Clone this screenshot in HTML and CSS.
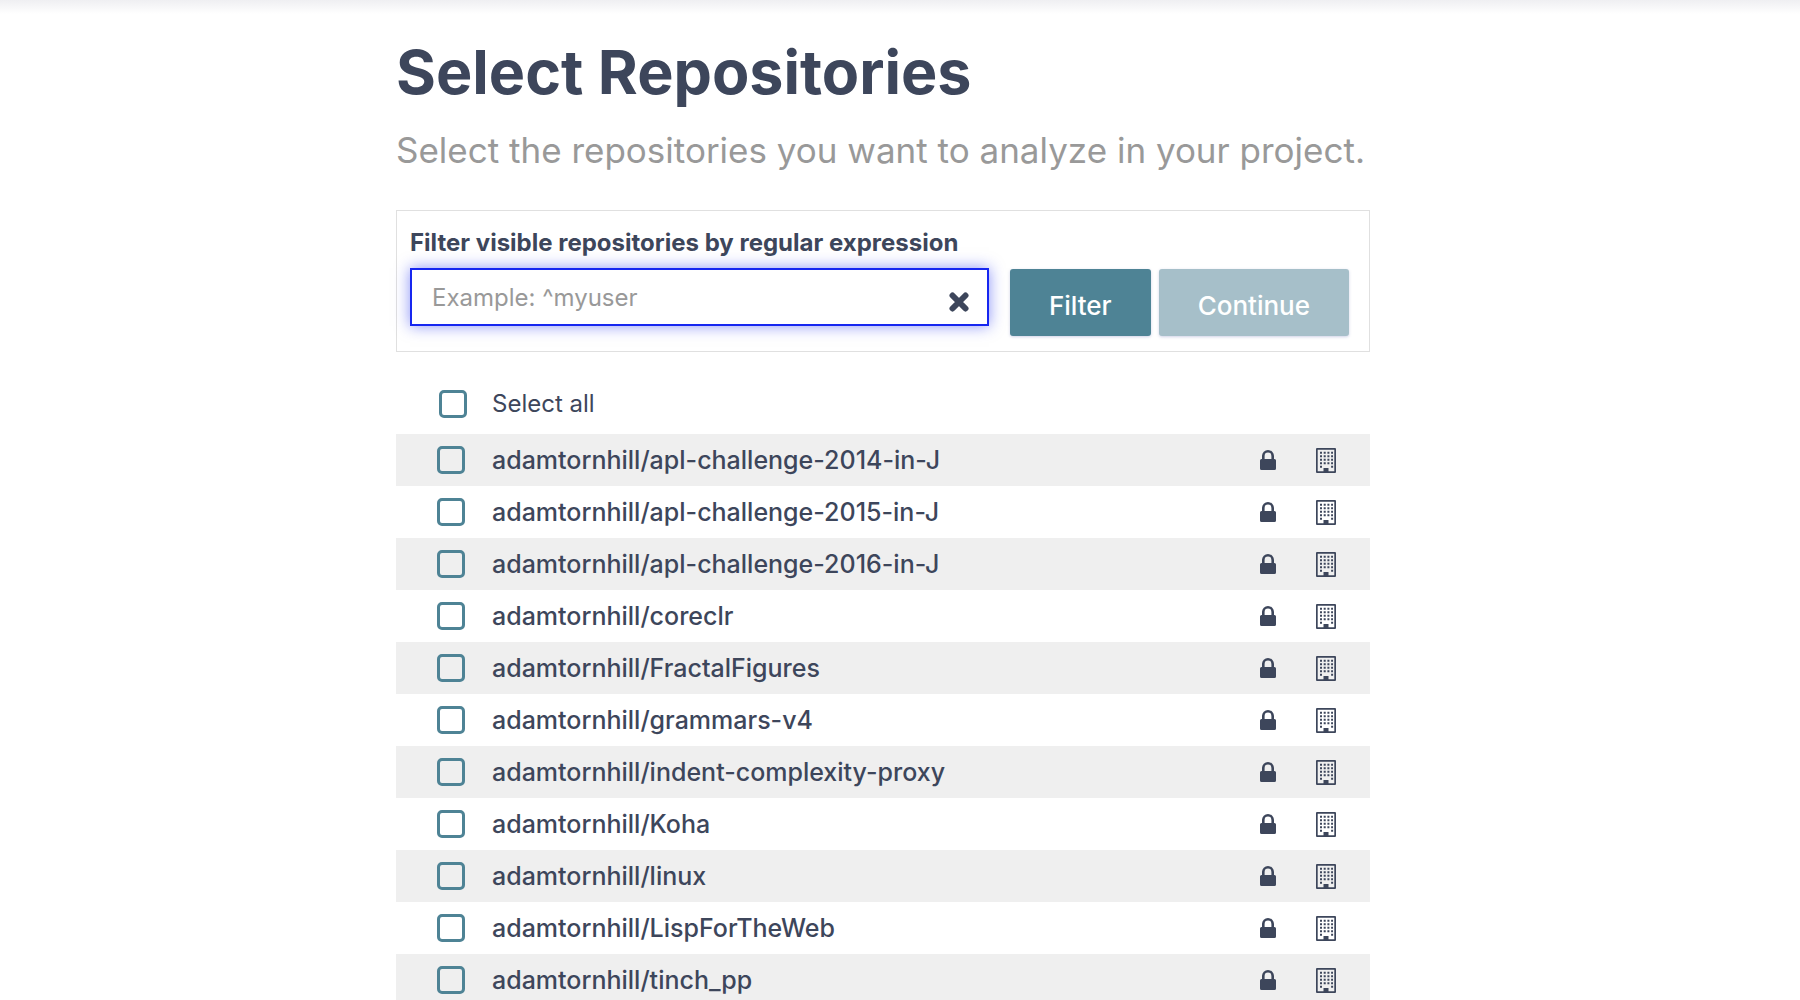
FILE: index.html
```html
<!DOCTYPE html>
<html lang="en">
<head>
<meta charset="utf-8">
<title>Select Repositories</title>
<link rel="stylesheet" href="styles.css">
</head>
<body>
<svg class="sprite" aria-hidden="true">
  <symbol id="lock" viewBox="0 0 16 20">
    <path fill-rule="evenodd" d="M1.500 9H2V6a6 6 0 0 1 12 0v3h.5A1.500 1.500 0 0 1 16 10.500v8a1.500 1.500 0 0 1-1.500 1.500h-13A1.500 1.500 0 0 1 0 18.500v-8A1.500 1.500 0 0 1 1.500 9zM4.600 9h6.800V6a3.400 3.400 0 0 0-6.800 0z"/>
  </symbol>
  <symbol id="building" viewBox="0 0 20 25">
    <path fill-rule="evenodd" d="M1 0h18a1 1 0 0 1 1 1v23a1 1 0 0 1-1 1H1a1 1 0 0 1-1-1V1a1 1 0 0 1 1-1zM1.700 1.700v21.600H7.500V20h5v3.300h5.800V1.700z"/>
    <path fill="none" stroke="currentColor" stroke-width="2" stroke-dasharray="2 1.700" d="M4 4.800h13M4 8.300h13M4 11.800h13M4 15.300h13M4 18.800h2M15.100 18.800h2"/>
  </symbol>
</svg>
<main class="page">
  <div class="content">
    <h1 class="title">Select Repositories</h1>
    <p class="subtitle">Select the repositories you want to analyze in your project.</p>
    <form class="filter">
      <div class="field">
        <label class="field-label" for="pattern">Filter visible repositories by regular expression</label>
        <div class="search">
          <input class="search-input" id="pattern" type="text" placeholder="Example: ^myuser">
          <button class="clear" type="button" aria-label="Clear filter">
            <svg width="20" height="20" viewBox="0 0 20 20"><path d="M3.500 3.500l13 13M16.500 3.500l-13 13" stroke="currentColor" stroke-width="6" stroke-linecap="round"/></svg>
          </button>
        </div>
      </div>
      <div class="actions">
        <button class="button" type="button">Filter</button>
        <button class="button" type="button" disabled>Continue</button>
      </div>
    </form>
    <label class="select-all"><input class="check" type="checkbox">Select all</label>
    <ul class="repos">
      <li class="repo"><label class="repo-name"><input class="check" type="checkbox">adamtornhill/apl-challenge-2014-in-J</label><svg class="lock"><use href="#lock"/></svg><svg class="building"><use href="#building"/></svg></li>
      <li class="repo"><label class="repo-name"><input class="check" type="checkbox">adamtornhill/apl-challenge-2015-in-J</label><svg class="lock"><use href="#lock"/></svg><svg class="building"><use href="#building"/></svg></li>
      <li class="repo"><label class="repo-name"><input class="check" type="checkbox">adamtornhill/apl-challenge-2016-in-J</label><svg class="lock"><use href="#lock"/></svg><svg class="building"><use href="#building"/></svg></li>
      <li class="repo"><label class="repo-name"><input class="check" type="checkbox">adamtornhill/coreclr</label><svg class="lock"><use href="#lock"/></svg><svg class="building"><use href="#building"/></svg></li>
      <li class="repo"><label class="repo-name"><input class="check" type="checkbox">adamtornhill/FractalFigures</label><svg class="lock"><use href="#lock"/></svg><svg class="building"><use href="#building"/></svg></li>
      <li class="repo"><label class="repo-name"><input class="check" type="checkbox">adamtornhill/grammars-v4</label><svg class="lock"><use href="#lock"/></svg><svg class="building"><use href="#building"/></svg></li>
      <li class="repo"><label class="repo-name"><input class="check" type="checkbox">adamtornhill/indent-complexity-proxy</label><svg class="lock"><use href="#lock"/></svg><svg class="building"><use href="#building"/></svg></li>
      <li class="repo"><label class="repo-name"><input class="check" type="checkbox">adamtornhill/Koha</label><svg class="lock"><use href="#lock"/></svg><svg class="building"><use href="#building"/></svg></li>
      <li class="repo"><label class="repo-name"><input class="check" type="checkbox">adamtornhill/linux</label><svg class="lock"><use href="#lock"/></svg><svg class="building"><use href="#building"/></svg></li>
      <li class="repo"><label class="repo-name"><input class="check" type="checkbox">adamtornhill/LispForTheWeb</label><svg class="lock"><use href="#lock"/></svg><svg class="building"><use href="#building"/></svg></li>
      <li class="repo"><label class="repo-name"><input class="check" type="checkbox">adamtornhill/tinch_pp</label><svg class="lock"><use href="#lock"/></svg><svg class="building"><use href="#building"/></svg></li>
    </ul>
  </div>
</main>
</body>
</html>
```
FILE: styles.css
```css
* { box-sizing: border-box; }

body {
  margin: 0;
  height: 100vh;
  overflow: hidden;
  background: #fff;
  color: #3d465b;
  font: 500 25px/32px Inter, "Liberation Sans", sans-serif;
}

.sprite { display: none; }

.page {
  padding: 34px 34px 0 0;
  background: linear-gradient(#efeff2, #fff 14px);
}

.content { max-width: 974px; margin: 0 auto; }

.title {
  margin: 0;
  font-size: 61px;
  line-height: 76px;
  font-weight: 700;
  white-space: nowrap;
}

.subtitle {
  margin: 18px 0 38px;
  color: #999;
  font-size: 35px;
  line-height: 44px;
  font-weight: 400;
  white-space: nowrap;
}

.filter {
  display: flex;
  align-items: flex-end;
  gap: 21px;
  padding: 16px 20px 15px 13px;
  border: 1px solid #e0e0e0;
}

.field { flex: 1; padding-bottom: 10px; }

.field-label {
  display: block;
  margin-bottom: 9px;
  font-size: 24px;
  font-weight: 700;
  white-space: nowrap;
}

.search {
  display: flex;
  align-items: center;
  height: 58px;
  padding: 2px 18px 0 20px;
  border: 2px solid #1626f0;
  background: #fff;
  box-shadow: 0 0 14px rgba(22, 38, 240, .5);
}

.search-input {
  flex: 1;
  min-width: 0;
  padding: 0;
  border: 0;
  outline: 0;
  background: none;
  color: inherit;
  font: inherit;
  font-size: 24px;
  font-weight: 400;
}

.search-input::placeholder { color: #999; opacity: 1; }

.clear {
  display: flex;
  padding: 8px 0 0;
  border: 0;
  background: none;
  color: inherit;
}

.actions { display: flex; gap: 8px; }

.button {
  height: 67px;
  padding: 7px 39px 0;
  border: 0;
  border-radius: 3px;
  background: #4e8395;
  box-shadow: 0 1px 3px rgba(61, 70, 160, .25);
  color: #fff;
  font: inherit;
  font-size: 26px;
}

.button:disabled { background: #a6bfc9; }

.check {
  appearance: none;
  flex: none;
  width: 28px;
  height: 28px;
  margin: 0;
  border: 3px solid #4e8395;
  border-radius: 5px;
}

.select-all {
  display: flex;
  align-items: center;
  gap: 25px;
  height: 60px;
  margin-top: 22px;
  padding-left: 43px;
  font-size: 24px;
  font-weight: 400;
}

.repos { margin: 0; padding: 0; list-style: none; }

.repo {
  display: flex;
  align-items: center;
  height: 52px;
  padding: 0 34px 0 41px;
}

.repo:nth-child(odd) { background: #efefef; }

.repo-name { display: flex; align-items: center; gap: 27px; flex: 1; }

.lock { width: 16px; height: 20px; margin-right: 40px; fill: currentColor; }

.building { width: 20px; height: 25px; fill: currentColor; }
```
